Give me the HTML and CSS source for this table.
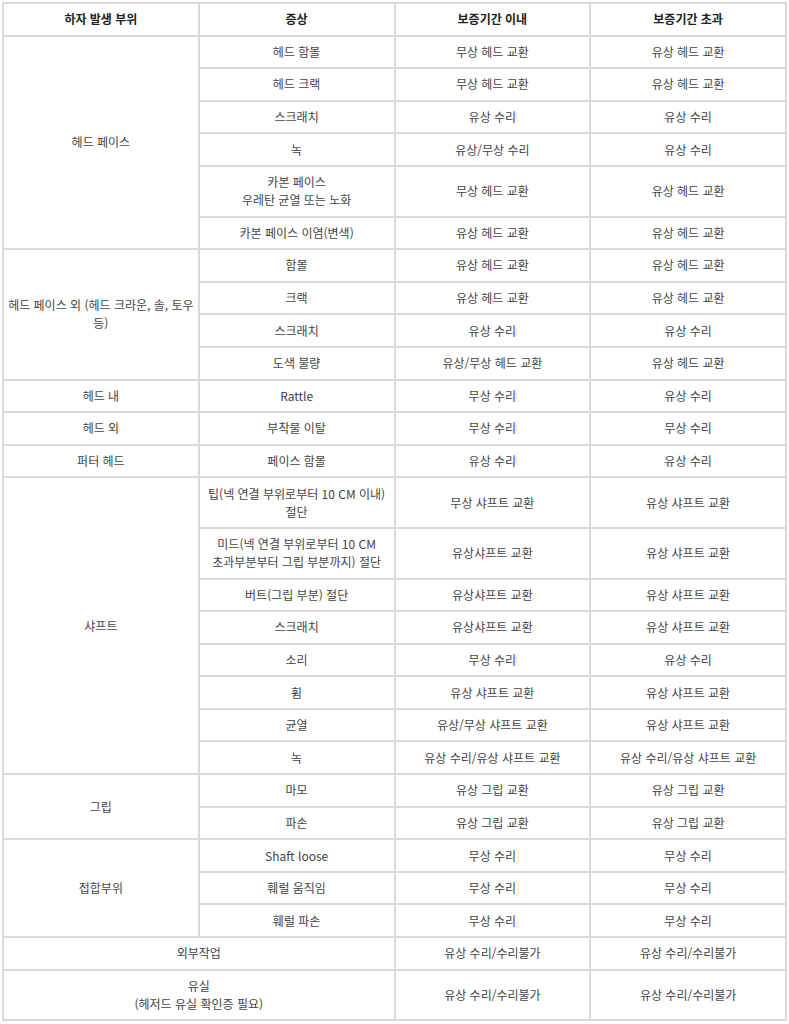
FILE: index.html
```html
<!DOCTYPE html>
<html lang="ko">
<head>
<meta charset="utf-8">
<link rel="stylesheet" href="styles.css">
</head>
<body>
<table class="warranty">
  <colgroup><col class="c"><col class="c"><col class="c"><col class="c"></colgroup>
  <thead>
    <tr><th>하자 발생 부위</th><th>증상</th><th>보증기간 이내</th><th>보증기간 초과</th></tr>
  </thead>
  <tbody>
    <tr><td rowspan="6">헤드 페이스</td><td>헤드 함몰</td><td>무상 헤드 교환</td><td>유상 헤드 교환</td></tr>
    <tr><td>헤드 크랙</td><td>무상 헤드 교환</td><td>유상 헤드 교환</td></tr>
    <tr><td>스크래치</td><td>유상 수리</td><td>유상 수리</td></tr>
    <tr><td>녹</td><td>유상/무상 수리</td><td>유상 수리</td></tr>
    <tr><td>카본 페이스<br>우레탄 균열 또는 노화</td><td>무상 헤드 교환</td><td>유상 헤드 교환</td></tr>
    <tr><td>카본 페이스 이염(변색)</td><td>유상 헤드 교환</td><td>유상 헤드 교환</td></tr>
    <tr><td rowspan="4">헤드 페이스 외 (헤드 크라운, 솔, 토우 등)</td><td>함몰</td><td>유상 헤드 교환</td><td>유상 헤드 교환</td></tr>
    <tr><td>크랙</td><td>유상 헤드 교환</td><td>유상 헤드 교환</td></tr>
    <tr><td>스크래치</td><td>유상 수리</td><td>유상 수리</td></tr>
    <tr><td>도색 불량</td><td>유상/무상 헤드 교환</td><td>유상 헤드 교환</td></tr>
    <tr><td>헤드 내</td><td>Rattle</td><td>무상 수리</td><td>유상 수리</td></tr>
    <tr><td>헤드 외</td><td>부착물 이탈</td><td>무상 수리</td><td>무상 수리</td></tr>
    <tr><td>퍼터 헤드</td><td>페이스 함몰</td><td>유상 수리</td><td>유상 수리</td></tr>
    <tr><td rowspan="8">샤프트</td><td>팁(넥 연결 부위로부터 10 CM 이내)<br>절단</td><td>무상 샤프트 교환</td><td>유상 샤프트 교환</td></tr>
    <tr><td>미드(넥 연결 부위로부터 10 CM<br>초과부분부터 그립 부분까지) 절단</td><td>유상샤프트 교환</td><td>유상 샤프트 교환</td></tr>
    <tr><td>버트(그립 부분) 절단</td><td>유상샤프트 교환</td><td>유상 샤프트 교환</td></tr>
    <tr><td>스크래치</td><td>유상샤프트 교환</td><td>유상 샤프트 교환</td></tr>
    <tr><td>소리</td><td>무상 수리</td><td>유상 수리</td></tr>
    <tr><td>휨</td><td>유상 샤프트 교환</td><td>유상 샤프트 교환</td></tr>
    <tr><td>균열</td><td>유상/무상 샤프트 교환</td><td>유상 샤프트 교환</td></tr>
    <tr><td>녹</td><td>유상 수리/유상 샤프트 교환</td><td>유상 수리/유상 샤프트 교환</td></tr>
    <tr><td rowspan="2">그립</td><td>마모</td><td>유상 그립 교환</td><td>유상 그립 교환</td></tr>
    <tr><td>파손</td><td>유상 그립 교환</td><td>유상 그립 교환</td></tr>
    <tr><td rowspan="3">접합부위</td><td>Shaft loose</td><td>무상 수리</td><td>무상 수리</td></tr>
    <tr><td>훼럴 움직임</td><td>무상 수리</td><td>무상 수리</td></tr>
    <tr><td>훼럴 파손</td><td>무상 수리</td><td>무상 수리</td></tr>
    <tr><td colspan="2">외부작업</td><td>유상 수리/수리불가</td><td>유상 수리/수리불가</td></tr>
    <tr><td colspan="2">유실<br>(헤저드 유실 확인증 필요)</td><td>유상 수리/수리불가</td><td>유상 수리/수리불가</td></tr>
  </tbody>
</table>
</body>
</html>
```

FILE: styles.css
```css
html, body {
  margin: 0;
  padding: 0;
  background: #fff;
}
body {
  padding: 2px 2px 0 2px;
  font-family: "Noto Sans CJK KR", "Noto Sans", sans-serif;
  font-size: 12px;
  color: #444;
}
.warranty {
  width: 785px;
  border-collapse: collapse;
  table-layout: fixed;
}
.warranty .c {
  width: 25%;
}
.warranty th,
.warranty td {
  border: 2px solid #d9d9d9;
  padding: 6.3px 4px;
  line-height: 18px;
  text-align: center;
  vertical-align: middle;
  word-break: keep-all;
}
.warranty th {
  font-weight: 700;
  color: #222;
}
.warranty td {
  font-weight: 400;
}
```
